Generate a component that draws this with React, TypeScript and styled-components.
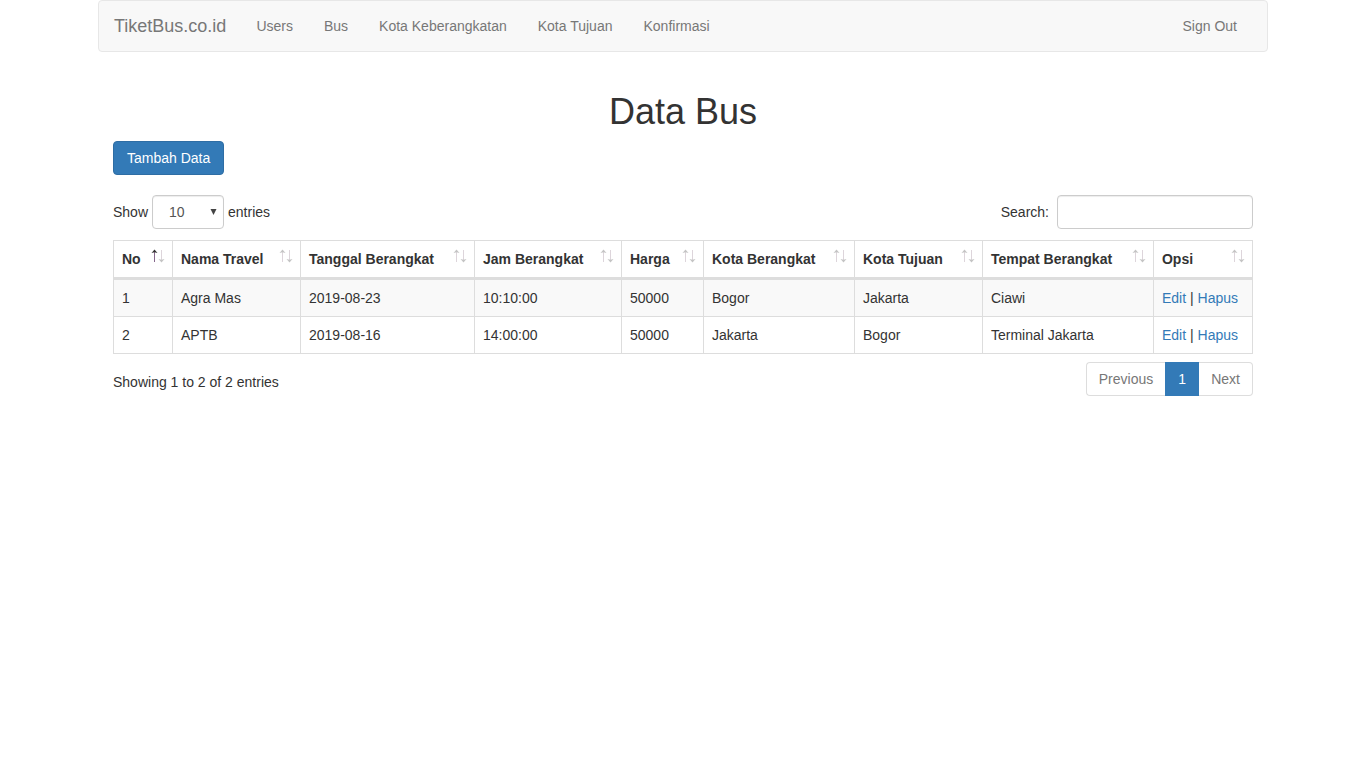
import React from "react";
import styled, { createGlobalStyle } from "styled-components";

const GlobalStyle = createGlobalStyle`
  *, *::before, *::after { box-sizing: border-box; }
  body {
    margin: 0;
    background: #fff;
    color: #333;
    font: 14px/20px "Helvetica Neue", Helvetica, Arial, "Liberation Sans", sans-serif;
  }
  a { color: #337ab7; text-decoration: none; }
  button, input, select { font: inherit; }
`;

const Container = styled.div`
  max-width: 1170px;
  margin: 0 auto;
`;

const Navbar = styled.nav`
  display: flex;
  align-items: center;
  min-height: 52px;
  margin-bottom: 20px;
  padding: 0 15px;
  background: #f8f8f8;
  border: 1px solid #e7e7e7;
  border-radius: 4px;
`;

const Brand = styled.a`
  && { color: #777; }
  padding-right: 15px;
  font-size: 18px;
`;

const NavList = styled.ul`
  display: flex;
  flex: 1;
  gap: 1px;
  margin: 0;
  padding: 0;
  list-style: none;
`;

const NavItem = styled.li<{ $end?: boolean }>`
  margin-left: ${(p) => (p.$end ? "auto" : "0")};
`;

const NavLink = styled.a`
  && { color: #777; }
  display: block;
  padding: 15px;
`;

const Main = styled.main`
  padding: 0 15px;
`;

const Title = styled.h1`
  margin: 0;
  padding: 20px 0 10px;
  font-size: 36px;
  font-weight: 500;
  line-height: 39px;
  text-align: center;
`;

const PrimaryButton = styled.button`
  display: block;
  height: 34px;
  padding: 6px 13px;
  color: #fff;
  background: #337ab7;
  border: 1px solid #2e6da4;
  border-radius: 4px;
`;

const Toolbar = styled.div`
  display: flex;
  justify-content: space-between;
  margin: 20px 0 11px;
`;

const Field = styled.label`
  display: flex;
  align-items: center;
  gap: 4px;
`;

const SelectBox = styled.span`
  position: relative;
  display: inline-flex;
`;

const Caret = styled.svg`
  position: absolute;
  right: 7px;
  top: 14px;
  pointer-events: none;
`;

const Select = styled.select`
  appearance: none;
  width: 72px;
  height: 34px;
  padding: 6px 16px;
  color: #555;
  background: #fff;
  border: 1px solid #ccc;
  border-radius: 4px;
  box-shadow: inset 0 1px 1px rgba(0, 0, 0, 0.075);
`;

const SearchInput = styled.input`
  width: 196px;
  height: 34px;
  margin-left: 4px;
  padding: 6px 12px;
  color: #555;
  border: 1px solid #ccc;
  border-radius: 4px;
  box-shadow: inset 0 1px 1px rgba(0, 0, 0, 0.075);
`;

const Table = styled.table`
  width: 100%;
  table-layout: fixed;
  border: 1px solid #ddd;
  border-collapse: separate;
  border-spacing: 0;
`;

const HeadCell = styled.th`
  padding: 8px;
  text-align: left;
  white-space: nowrap;
  border: 0 solid #ddd;
  border-width: 0 1px 3px 0;
  &:last-child { border-right: 0; }
`;

const HeadContent = styled.div`
  display: flex;
  justify-content: space-between;
  height: 20px;
`;

const SortIcon = styled.svg`
  flex: none;
  margin-right: -1px;
`;

const Row = styled.tr`
  &:nth-child(odd) { background: #f9f9f9; }
  &:last-child td { border-bottom: 0; }
`;

const Cell = styled.td`
  padding: 8px;
  white-space: nowrap;
  border: 0 solid #ddd;
  border-width: 0 1px 1px 0;
  &:last-child { border-right: 0; }
`;

const Footer = styled.div`
  display: flex;
  justify-content: space-between;
  padding-top: 8px;
`;

const Info = styled.div`
  padding-top: 10px;
`;

const Pagination = styled.nav`
  display: flex;
`;

const PageButton = styled.button<{ $active?: boolean }>`
  min-width: 34px;
  height: 34px;
  padding: 6px 12px;
  color: ${(p) => (p.$active ? "#fff" : "#777")};
  background: ${(p) => (p.$active ? "#337ab7" : "#fff")};
  border: 1px solid ${(p) => (p.$active ? "#337ab7" : "#ddd")};
  &:first-child { border-right: 0; border-radius: 4px 0 0 4px; }
  &:last-child { border-left: 0; border-radius: 0 4px 4px 0; }
`;

const columns = [
  { label: "No", width: 59 },
  { label: "Nama Travel", width: 128 },
  { label: "Tanggal Berangkat", width: 174 },
  { label: "Jam Berangkat", width: 147 },
  { label: "Harga", width: 82 },
  { label: "Kota Berangkat", width: 151 },
  { label: "Kota Tujuan", width: 128 },
  { label: "Tempat Berangkat", width: 171 },
  { label: "Opsi", width: 98 },
];

const rows = [
  ["1", "Agra Mas", "2019-08-23", "10:10:00", "50000", "Bogor", "Jakarta", "Ciawi"],
  ["2", "APTB", "2019-08-16", "14:00:00", "50000", "Jakarta", "Bogor", "Terminal Jakarta"],
];

const navigation = ["Users", "Bus", "Kota Keberangkatan", "Kota Tujuan", "Konfirmasi"];

function SortArrows({ ascending }: { ascending: boolean }) {
  return (
    <SortIcon width="14" height="14" viewBox="0 0 14 14" aria-hidden="true">
      <path d="M3.5 3V13" stroke={ascending ? "#86688c" : "#ddd5db"} />
      <path d="M3.5 0.5L6.5 4L3.5 3.2L0.5 4Z" fill={ascending ? "#333" : "#c4c4c4"} />
      <path d="M10.5 1V11" stroke="#ddd5db" />
      <path d="M10.5 13.5L13.5 10L10.5 10.8L7.5 10Z" fill="#c4c4c4" />
    </SortIcon>
  );
}

export default function App() {
  return (
    <Container>
      <GlobalStyle />
      <Navbar>
        <Brand href="#">TiketBus.co.id</Brand>
        <NavList>
          {navigation.map((label) => (
            <NavItem key={label}><NavLink href="#">{label}</NavLink></NavItem>
          ))}
          <NavItem $end><NavLink href="#">Sign Out</NavLink></NavItem>
        </NavList>
      </Navbar>
      <Main>
        <Title>Data Bus</Title>
        <PrimaryButton type="button">Tambah Data</PrimaryButton>
        <Toolbar>
          <Field>
            Show
            <SelectBox>
              <Select defaultValue="10">
                <option>10</option>
                <option>25</option>
                <option>50</option>
                <option>100</option>
              </Select>
              <Caret width="7" height="6" viewBox="0 0 7 6" aria-hidden="true">
                <path d="M0.5 0H6.5L3.5 6Z" fill="#444" />
              </Caret>
            </SelectBox>
            entries
          </Field>
          <Field>Search:<SearchInput type="search" /></Field>
        </Toolbar>
        <Table>
          <colgroup>
            {columns.map((c) => (
              <col key={c.label} style={{ width: `${(c.width / 1138) * 100}%` }} />
            ))}
          </colgroup>
          <thead>
            <tr>
              {columns.map((c, i) => (
                <HeadCell key={c.label} scope="col">
                  <HeadContent>{c.label}<SortArrows ascending={i === 0} /></HeadContent>
                </HeadCell>
              ))}
            </tr>
          </thead>
          <tbody>
            {rows.map((row) => (
              <Row key={row[0]}>
                {row.map((value, i) => <Cell key={i}>{value}</Cell>)}
                <Cell><a href="#">Edit</a> | <a href="#">Hapus</a></Cell>
              </Row>
            ))}
          </tbody>
        </Table>
        <Footer>
          <Info>Showing 1 to 2 of 2 entries</Info>
          <Pagination aria-label="Table pages">
            <PageButton type="button">Previous</PageButton>
            <PageButton type="button" $active>1</PageButton>
            <PageButton type="button">Next</PageButton>
          </Pagination>
        </Footer>
      </Main>
    </Container>
  );
}
